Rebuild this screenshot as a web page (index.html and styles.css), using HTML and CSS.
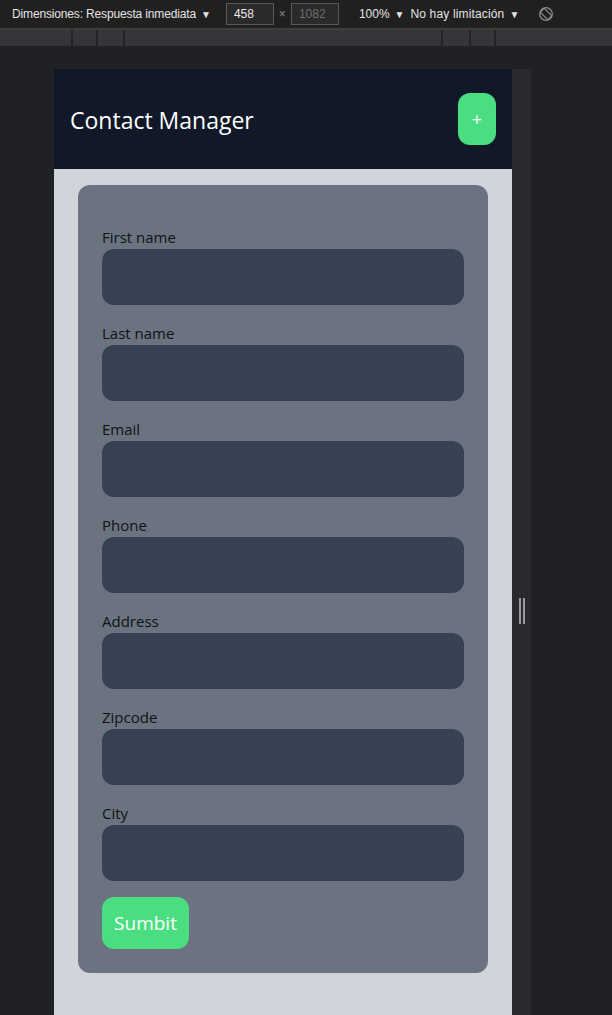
FILE: index.html
```html
<!DOCTYPE html>
<html lang="es">
<head>
<meta charset="utf-8">
<title>Contact Manager</title>
<link rel="stylesheet" href="styles.css">
</head>
<body>
<div class="devbar">
  <span class="dev-label">Dimensiones: Respuesta inmediata</span><span class="caret">▼</span>
  <span class="dev-input dev-w">458</span>
  <span class="times">×</span>
  <span class="dev-input dev-h">1082</span>
  <span class="dev-zoom">100%</span><span class="caret">▼</span>
  <span class="dev-throttle">No hay limitación</span><span class="caret">▼</span>
  <svg class="rotate" width="16" height="16" viewBox="0 0 16 16" aria-hidden="true">
    <circle cx="8" cy="8" r="6.3" fill="none" stroke="#8a8a8a" stroke-width="1.3"/>
    <rect x="5.2" y="2.6" width="5.6" height="10.8" rx="1" fill="none" stroke="#8a8a8a" stroke-width="1.3" transform="rotate(-45 8 8)"/>
  </svg>
</div>
<div class="ruler">
  <span class="seg s71"></span><span class="seg s23"></span><span class="seg s25"></span><span class="seg s316"></span><span class="seg s26"></span><span class="seg s23"></span><span class="seg rest"></span>
</div>
<div class="stage">
  <div class="viewport">
    <header class="app-header">
      <h1 class="title">Contact Manager</h1>
      <button class="btn add-btn" type="button">+</button>
    </header>
    <main class="page">
      <form class="card">
        <div class="field"><label class="label">First name</label><input class="input" type="text"></div>
        <div class="field"><label class="label">Last name</label><input class="input" type="text"></div>
        <div class="field"><label class="label">Email</label><input class="input" type="text"></div>
        <div class="field"><label class="label">Phone</label><input class="input" type="text"></div>
        <div class="field"><label class="label">Address</label><input class="input" type="text"></div>
        <div class="field"><label class="label">Zipcode</label><input class="input" type="text"></div>
        <div class="field"><label class="label">City</label><input class="input" type="text"></div>
        <div class="actions"><button class="btn submit-btn" type="button">Sumbit</button></div>
      </form>
    </main>
  </div>
  <div class="resize-strip"><span class="grip"></span></div>
</div>
</body>
</html>
```

FILE: styles.css
```css
* { box-sizing: border-box; }
html, body { margin: 0; padding: 0; }
body {
  background: #202124;
  height: 1015px;
  overflow: hidden;
  font-family: "Liberation Sans", Arial, sans-serif;
}

/* devtools toolbar */
.devbar {
  height: 28px;
  background: #202020;
  display: flex;
  align-items: center;
  padding-left: 12px;
  font-size: 12px;
  color: #e3e3e3;
  font-family: "Liberation Sans", Arial, sans-serif;
}
.dev-label { white-space: nowrap; letter-spacing: -0.15px; }
.caret { font-size: 10px; margin-left: 5px; color: #e3e3e3; }
.dev-input {
  width: 48px;
  height: 22px;
  border: 1px solid #5a5a5a;
  background: #2a2a2a;
  display: flex;
  align-items: center;
  padding-left: 7px;
  margin-left: 15px;
}
.dev-h { margin-left: 0; color: #6f6f6f; }
.dev-w { color: #e8e8e8; }
.times { width: 17px; text-align: center; color: #8a8a8a; font-size: 12px; }
.dev-zoom { margin-left: 20px; }
.dev-throttle { margin-left: 6px; letter-spacing: 0.15px; }
.rotate { margin-left: 19px; }

.ruler {
  border-top: 2px solid #3d3d3d;
  height: 18px;
  background: #35363a;
  display: flex;
}
.seg { height: 16px; border-right: 2px solid #232323; flex: none; }
.s71 { width: 73px; }
.s23 { width: 25px; }
.s25 { width: 27px; }
.s316 { width: 318px; }
.s26 { width: 28px; }
.rest { flex: 1; border-right: 0; }

.stage {
  display: flex;
  padding-top: 23px;
  padding-left: 54px;
}
.viewport {
  width: 458px;
  height: 946px;
  background: #d1d5db;
  font-family: "Open Sans", "Noto Sans", sans-serif;
  overflow: hidden;
}
.resize-strip {
  width: 19px;
  height: 946px;
  background: #292a2d;
  display: flex;
  justify-content: center;
  padding-top: 529px;
}
.grip {
  width: 6px;
  height: 26px;
  border-left: 2px solid #9a9a9a;
  border-right: 2px solid #9a9a9a;
}

/* app */
.app-header {
  background: #111827;
  height: 100px;
  display: flex;
  align-items: center;
  justify-content: space-between;
  padding: 0 16px;
}
.title {
  margin: 0;
  color: #ffffff;
  font-size: 23px;
  font-weight: 400;
  line-height: 32px;
  padding-top: 2px;
}
.btn {
  border: 0;
  background: #4ade80;
  color: #ffffff;
  font-family: "Open Sans", "Noto Sans", sans-serif;
  border-radius: 12px;
  padding: 0;
  cursor: pointer;
}
.add-btn {
  width: 38px;
  height: 52px;
  font-size: 18px;
  line-height: 24px;
}
.page { padding: 16px 24px; }
.card {
  background: #6b7280;
  border-radius: 12px;
  padding: 24px;
}
.field { margin-top: 16px; display: flex; flex-direction: column; }
.label {
  font-size: 15px;
  line-height: 24px;
  height: 24px;
  color: #121212;
}
.input {
  height: 56px;
  border: 0;
  border-radius: 12px;
  background: #374151;
  width: 100%;
  outline: none;
}
.actions { margin-top: 16px; display: flex; }
.submit-btn {
  width: 87px;
  height: 52px;
  font-size: 19px;
  line-height: 28px;
}
```
